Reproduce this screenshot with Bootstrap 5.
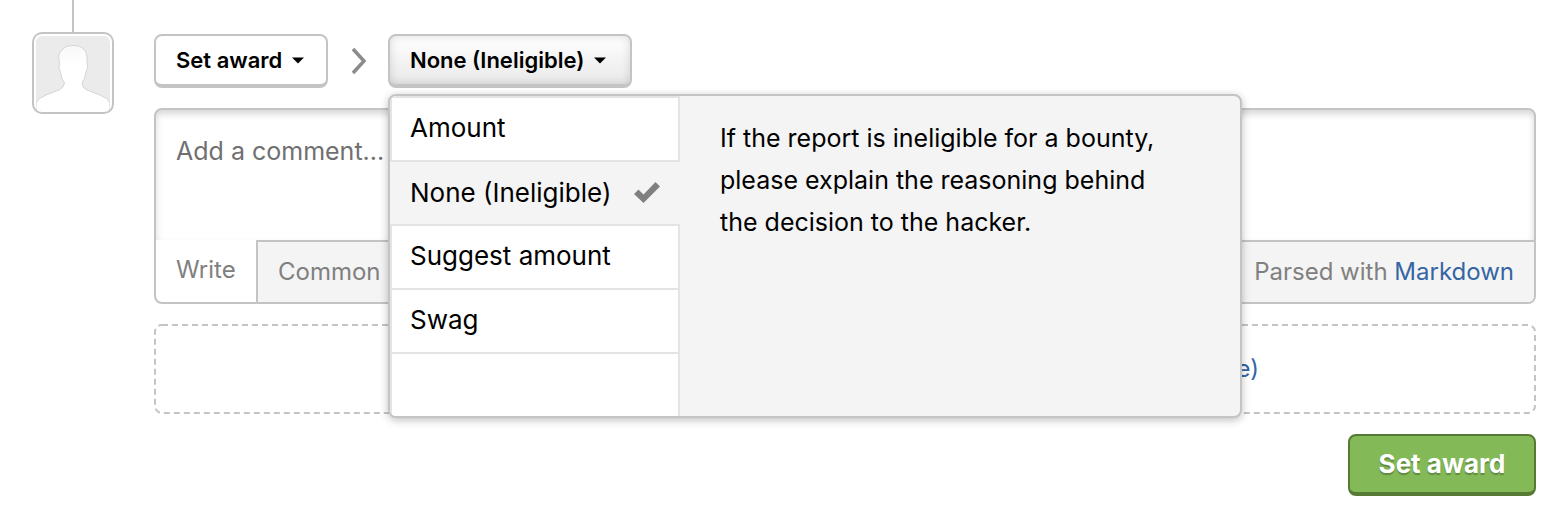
<!DOCTYPE html>
<html lang="en">
<head>
<meta charset="utf-8">
<meta name="viewport" content="width=device-width, initial-scale=1">
<title>Set award</title>
<link href="https://cdn.jsdelivr.net/npm/bootstrap@5.3.0/dist/css/bootstrap.min.css" rel="stylesheet">
<style>
  body { font-family: Inter, "Liberation Sans", sans-serif; font-size: 24px; line-height: 32px; color: #000; background: #fff; overflow: hidden; }
  .timeline { width: 82px; margin-left: 32px; margin-right: 40px; }
  .timeline-line { width: 2px; height: 32px; background: #c4c4c4; }
  .avatar { width: 82px; height: 82px; border: 2px solid #c4c4c4; border-radius: 10px; padding: 2px; }
  .composer { padding: 34px 32px 0 0; }
  .btn-pick { height: 54px; padding: 0 20px; border: 2px solid #c4c4c4; border-bottom-width: 4px; border-radius: 8px; background: #fff; color: #000; font-size: 22px; font-weight: 600; line-height: 48px; text-align: left; white-space: nowrap; }
  .btn-pick svg { margin-left: 10px; }
  .btn-award-type { width: 174px; }
  .btn-choice, .btn-choice.btn.show { width: 244px; background: linear-gradient(#fff, #e9e9e9); border-color: #c4c4c4; color: #000; box-shadow: inset 0 0 10px rgba(0,0,0,.14); }
  .award-menu { position: absolute; top: 60px; left: 0; z-index: 10; width: 854px; height: 324px; border: 2px solid #c4c4c4; border-radius: 8px; background: #f4f4f4; box-shadow: 0 2px 8px rgba(0,0,0,.26); overflow: hidden; }
  .award-options { width: 290px; border: 2px solid #e4e4e4; border-top: 0; }
  .award-option { height: 64px; padding: 0 18px; border-top: 2px solid #e4e4e4; background: #fff; font-size: 26px; line-height: 60px; white-space: nowrap; }
  .award-option.chosen { background: #f4f4f4; margin: 0 -2px; padding: 0 20px; }
  .award-help { padding: 21px 0 0 40px; font-size: 25px; line-height: 42px; }
  .editor { height: 196px; margin-top: 20px; border: 2px solid #c4c4c4; border-radius: 8px; overflow: hidden; }
  .editor-text { height: 130px; padding: 25px 20px; box-shadow: inset 0 4px 7px rgba(0,0,0,.16); color: #707070; font-size: 25px; }
  .editor-bar { height: 62px; color: #808080; line-height: 60px; }
  .tab-write { width: 100px; padding-left: 20px; }
  .bar-rest { border-top: 2px solid #c4c4c4; border-left: 2px solid #c4c4c4; background: #f4f4f4; padding: 0 20px; }
  .lnk { color: #3465a4; text-decoration: none; }
  .dropzone { height: 90px; margin-top: 20px; padding-right: 277px; }
  .dropzone svg { position: absolute; inset: 0; }
  .btn-submit { width: 188px; height: 62px; margin-top: 20px; padding: 0; border: 2px solid #567a36; border-bottom-width: 4px; border-radius: 8px; background: #83b957; color: #fff; font-size: 26px; font-weight: 700; line-height: 56px; text-shadow: 0 2px 1px rgba(0,0,0,.25); }
  .t { display: inline-block; }
</style>
</head>
<body>
<main class="d-flex">
  <aside class="timeline flex-shrink-0 d-flex flex-column align-items-center">
    <div class="timeline-line"></div>
    <div class="avatar">
      <svg class="d-block" width="74" height="74" viewBox="0 0 74 74">
        <defs><linearGradient id="fade" x1="0" y1="0" x2="0" y2="1"><stop offset="0" stop-color="#f8f8f8"/><stop offset=".3" stop-color="#fff"/></linearGradient></defs>
        <rect width="74" height="74" rx="6" fill="#ebebeb"/>
        <path d="M0 74V67Q2 62 10 59L24 53.500Q28 51 28.500 47Q25 43 24.500 36Q22 32 23.500 27Q21 18 26 14Q29 9.500 37 9.500Q50 9 51 21L51 27Q53 31 50 36Q49 43 46 47Q46 51 50 53.500L64 59Q72 62 74 67V74Z" fill="url(#fade)" stroke="#d5d5d5"/>
        <path d="M1.500 72H72.500" stroke="#fff" stroke-width="5"/>
      </svg>
    </div>
  </aside>

  <section class="composer flex-grow-1">
    <div class="d-flex align-items-start">
      <button type="button" class="btn btn-pick btn-award-type d-flex align-items-center"><span class="t t-set">Set award</span><svg width="12" height="7"><path d="M0 .5H12L6 6.500Z"/></svg></button>
      <svg class="flex-shrink-0" width="60" height="54" viewBox="0 0 60 54"><path d="M25 15L36 27L25 39" fill="none" stroke="#8b8b8b" stroke-width="3.500"/></svg>
      <div class="position-relative">
        <button type="button" class="btn btn-pick btn-choice d-flex align-items-center"><span class="t t-none">None (Ineligible)</span><svg width="12" height="7"><path d="M0 .5H12L6 6.500Z"/></svg></button>
        <div class="award-menu d-flex">
          <div class="award-options flex-shrink-0">
            <div class="award-option"><span class="t o1">Amount</span></div>
            <div class="award-option chosen d-flex align-items-center justify-content-between"><span class="t o2">None (Ineligible)</span><svg width="26" height="22" viewBox="0 0 26 22"><path d="M0 12L4.500 7.500L9.500 12.500L21.500 0L26 4.500L9.500 21Z" fill="#808080"/></svg></div>
            <div class="award-option"><span class="t o3">Suggest amount</span></div>
            <div class="award-option"><span class="t o4">Swag</span></div>
            <div class="award-option"></div>
          </div>
          <div class="award-help"><span class="t h1x">If the report is ineligible for a bounty,</span><br><span class="t h2x">please explain the reasoning behind</span><br><span class="t h3x">the decision to the hacker.</span></div>
        </div>
      </div>
    </div>

    <div class="editor">
      <div class="editor-text"><span class="t ph">Add a comment...</span></div>
      <div class="editor-bar d-flex">
        <div class="tab-write"><span class="t wr">Write</span></div>
        <div class="bar-rest flex-grow-1 d-flex justify-content-between"><span class="t cm">Common</span><span class="t md">Parsed with <a class="lnk" href="#">Markdown</a></span></div>
      </div>
    </div>

    <div class="dropzone position-relative d-flex align-items-center justify-content-end">
      <svg width="1382" height="90"><rect x="1" y="1" width="1380" height="88" rx="7" fill="none" stroke="#c4c4c4" stroke-width="2" stroke-dasharray="6 4"/></svg>
      <a class="lnk" href="#">e)</a>
    </div>

    <div class="d-flex justify-content-end"><button type="button" class="btn btn-submit"><span class="t sb">Set award</span></button></div>
  </section>
</main>
<script src="https://cdn.jsdelivr.net/npm/bootstrap@5.3.0/dist/js/bootstrap.bundle.min.js"></script>
</body>
</html>
